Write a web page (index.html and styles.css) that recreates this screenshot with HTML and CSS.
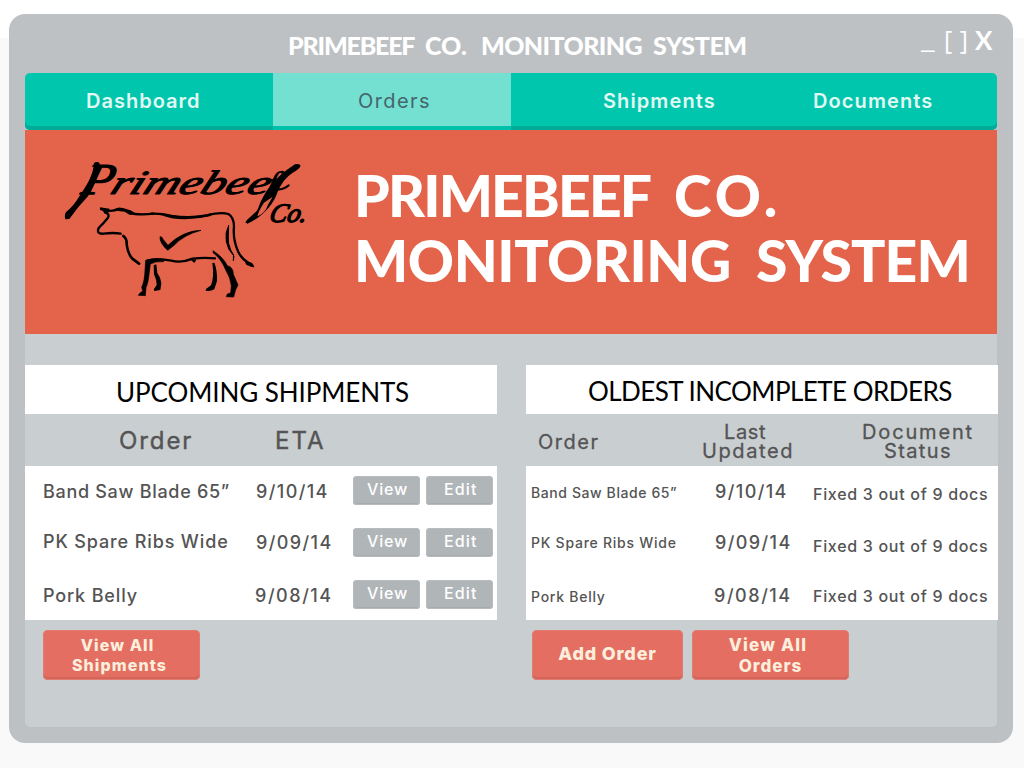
FILE: index.html
```html
<!DOCTYPE html>
<html lang="en">
<head>
<meta charset="utf-8">
<title>Primebeef Co. Monitoring System</title>
<link rel="stylesheet" href="styles.css">
</head>
<body>
<div class="window">
  <header class="titlebar">
    <h2 class="window-title"><span class="w-prime">PRIMEBEEF</span> <span class="w-co">CO.</span> <span class="w-monitoring">MONITORING</span> <span class="w-system">SYSTEM</span></h2>
    <div class="controls"><span class="minimize">_</span><span class="maximize">[ ]</span><span class="close">X</span></div>
  </header>
  <nav class="nav">
    <a class="tab tab-dashboard">Dashboard</a>
    <a class="tab tab-orders active">Orders</a>
    <a class="tab tab-shipments">Shipments</a>
    <a class="tab tab-documents">Documents</a>
  </nav>
  <main class="content">
    <section class="banner">
      <svg class="logo" viewBox="0 0 810 480" width="270" height="160">
        <g font-family="Liberation Serif, serif" font-style="italic" stroke="#000" stroke-width="4" stroke-linejoin="round">
          <text transform="translate(90 131) skewX(-16)" font-size="132" textLength="92" lengthAdjust="spacingAndGlyphs">P</text>
          <text transform="translate(176 131) skewX(-22)" font-size="102" stroke-width="3" textLength="474" lengthAdjust="spacingAndGlyphs">rimebee</text>
          <text transform="translate(646 131) skewX(-14)" font-size="98" stroke-width="2">f</text>
          <text transform="translate(655 216) skewX(-14)" font-size="80" textLength="112" lengthAdjust="spacingAndGlyphs">Co.</text>
        </g>
        <path d="M132 39Q142 33 149 40C150 66 134 108 114 139Q84 170 58 207L46 208Q42 194 49 185Q70 170 88 139C112 104 130 74 132 39Z"/>
        <path d="M735 43Q748 39 752 47Q748 58 728 68Q700 86 683 125C672 161 637 202 592 221L586 217C594 204 616 192 624 176C641 128 673 81 735 43Z"/>
        <path d="M668 140Q654 162 648 178Q636 195 622 199Q626 181 642 158Z" fill="#e4644b"/>
        <path d="M668 114Q690 126 716 106" fill="none" stroke="#000" stroke-width="6" stroke-linecap="round"/>
        <g fill="none" stroke="#000" stroke-linecap="round" stroke-linejoin="round">
          <path d="M153 177L174 182Q193 184 206 176Q230 178 254 192Q281 195 310 191" stroke-width="7"/>
          <path d="M165 187Q180 191 174 203Q162 218 146 234Q138 253 161 251Q190 247 212 251" stroke-width="7"/>
          <path d="M305 191Q335 190 365 198Q423 206 470 196Q513 185 535 192Q552 202 552 230Q548 269 565 306Q576 328 595 338" stroke-width="7"/>
          <path d="M220 258Q231 266 230 283Q234 312 247 326L267 341" stroke-width="8"/>
          <path d="M292 332Q320 324 364 332Q394 340 428 326Q460 322 495 325" stroke-width="7"/>
        </g>
        <path d="M149 172L179 176L176 187L164 190Z"/>
        <path d="M188 180Q206 169 219 179L240 180L258 195L238 194L224 185L205 183Z"/>
        <path d="M330 195Q430 206 486 189L482 198Q422 213 365 205Z"/>
        <path d="M585 336Q609 333 613 352L605 351L589 344Z"/>
        <path d="M536 226Q524 250 529 275Q533 299 552 318L550 332Q555 314 542 300Q532 278 535 257Z" stroke="#000" stroke-width="3"/>
        <path d="M330 260Q337 259 340 269L354 286Q399 242 453 241Q400 255 371 287L353 301Q328 278 330 260Z" stroke="#000" stroke-width="2"/>
        <path d="M287 331Q320 322 342 328L341 335Q317 333 301 342L295 389Q292 404 288 413L286 437L265 436Q267 430 278 423L275 412Q284 393 285 361Z" stroke="#000" stroke-width="2"/>
        <path d="M311 346L319 343L322 369Q332 382 334 400L331 420L312 423L312 417L320 405Q320 389 312 373Z"/>
        <path d="M487 339L493 338Q502 360 501 393L493 418Q481 425 467 422L468 417L483 406Q493 381 487 339Z"/>
        <path d="M489 302Q519 321 532 347Q550 351 550 373L564 405L557 419L551 441L529 440L532 432L542 429L544 407Q540 380 528 362Q513 325 489 308Z" stroke="#000" stroke-width="2"/>
        <path d="M423 330L440 328L433 339Z"/>
      </svg>
      <h1 class="banner-title"><span class="line"><span class="b-prime">PRIMEBEEF</span> <span class="b-co">CO.</span></span><span class="line"><span class="b-monitoring">MONITORING</span> <span class="b-system">SYSTEM</span></span></h1>
    </section>
    <div class="panels">
      <section class="panel shipments">
        <h3 class="panel-title">UPCOMING SHIPMENTS</h3>
        <div class="panel-head"><span class="head-order">Order</span><span class="head-eta">ETA</span></div>
        <div class="rows">
          <div class="row"><span class="name name-blade">Band Saw Blade 65”</span><span class="date">9/10/14</span><button class="small view">View</button><button class="small edit">Edit</button></div>
          <div class="row"><span class="name name-ribs raised-more">PK Spare Ribs Wide</span><span class="date raised">9/09/14</span><button class="small view">View</button><button class="small edit">Edit</button></div>
          <div class="row"><span class="name">Pork Belly</span><span class="date date-last">9/08/14</span><button class="small view">View</button><button class="small edit">Edit</button></div>
        </div>
        <div class="actions"><button class="big all-shipments"><span class="shift">View All</span><span>Shipments</span></button></div>
      </section>
      <section class="panel orders">
        <h3 class="panel-title">OLDEST INCOMPLETE ORDERS</h3>
        <div class="panel-head"><span class="head-order">Order</span><span class="head-updated"><span class="last">Last</span><span>Updated</span></span><span class="head-status"><span class="document">Document</span><span class="status">Status</span></span></div>
        <div class="rows">
          <div class="row"><span class="name name-blade">Band Saw Blade 65”</span><span class="date">9/10/14</span><span class="docs">Fixed 3 out of 9 docs</span></div>
          <div class="row"><span class="name raised-more">PK Spare Ribs Wide</span><span class="date raised">9/09/14</span><span class="docs">Fixed 3 out of 9 docs</span></div>
          <div class="row"><span class="name">Pork Belly</span><span class="date date-last">9/08/14</span><span class="docs raised-more">Fixed 3 out of 9 docs</span></div>
        </div>
        <div class="actions"><button class="big add-order"><span>Add Order</span></button><button class="big all-orders"><span>View All</span><span class="orders-word">Orders</span></button></div>
      </section>
    </div>
  </main>
</div>
</body>
</html>
```

FILE: styles.css
```css
* { box-sizing: border-box; }
body {
  margin: 0;
  height: 768px;
  padding: 14px 11px 25px 9px;
  background: linear-gradient(#fff 38px, #f9f9f9 38px);
  font-family: Inter, sans-serif;
  color: #545454;
  overflow: hidden;
}
h1, h2, h3 { margin: 0; }
span { white-space: nowrap; }
.window {
  height: 729px;
  padding: 0 16px 16px;
  background: #bdc1c4;
  border-radius: 16px;
}
.titlebar {
  display: flex;
  height: 59px;
  padding-left: 263px;
  color: #fff;
}
.window-title {
  display: flex;
  width: 633px;
  font: 900 25px/62px Lato, sans-serif;
}
.w-prime { width: 137px; letter-spacing: -1.2px; }
.w-co { width: 56px; }
.w-monitoring { width: 172px; letter-spacing: -0.6px; }
.w-system { letter-spacing: -0.4px; }
.controls {
  display: flex;
  font: 500 25px/52px "Open Sans", sans-serif;
}
.minimize { width: 23px; transform: scaleX(1.25); transform-origin: left; line-height: 49px; }
.maximize { width: 31px; line-height: 50px; letter-spacing: 0.6px; }
.close { font: 700 26px/52px Lato, sans-serif; }
.nav {
  display: flex;
  height: 57px;
  background: #00c6ae;
  border-radius: 5px;
  box-shadow: inset 0 -4px #00ac97;
}
.tab {
  height: 57px;
  font-size: 20px;
  line-height: 57px;
  font-weight: 600;
  letter-spacing: 1.1px;
  color: #e2f8f3;
}
.tab-dashboard { width: 248px; padding-left: 61px; letter-spacing: 1px; }
.tab-orders {
  width: 238px;
  padding-left: 85px;
  background: #73e0d2;
  border-bottom: 4px solid #00c1aa;
  font-weight: 400;
  letter-spacing: 1.41px;
  color: #45666b;
}
.tab-shipments { width: 210px; padding-left: 92px; }
.tab-documents { padding-left: 92px; }
.content {
  height: 597px;
  background: #c9ced1;
  border-radius: 0 0 5px 5px;
}
.banner {
  display: flex;
  height: 204px;
  padding: 20px 0 0 25px;
  background: #e4644b;
}
.logo { display: block; flex: none; }
.banner-title {
  padding: 13px 0 0 34px;
  font: 900 57px/65px Lato, sans-serif;
  color: #fff;
}
.line { display: flex; }
.b-prime { width: 320px; letter-spacing: -1.8px; }
.b-co { letter-spacing: 4px; }
.b-monitoring { width: 402px; letter-spacing: -0.4px; }
.b-system { letter-spacing: -0.9px; }
.panels { display: flex; gap: 29px; padding-top: 31px; }
.panel { flex: none; width: 472px; }
.panel-title {
  height: 49px;
  background: #fff;
  font: 400 26px/54px Lato, sans-serif;
  color: #000;
}
.shipments .panel-title { padding-left: 91px; letter-spacing: -0.09px; }
.orders .panel-title { padding-left: 62px; line-height: 52px; letter-spacing: -0.54px; }
.panel-head { display: flex; height: 52px; background: #c9ced1; }
.shipments .panel-head { padding-left: 94px; font-size: 24px; line-height: 53px; -webkit-text-stroke: 0.4px #545454; }
.shipments .head-order { width: 156px; letter-spacing: 1.9px; }
.head-eta { letter-spacing: 2px; }
.orders .panel-head { padding-left: 12px; font-size: 20px; line-height: 19px; -webkit-text-stroke: 0.3px #545454; }
.orders .head-order { width: 164px; line-height: 56px; letter-spacing: 1.5px; }
.head-updated, .head-status { display: flex; flex-direction: column; padding-top: 9px; }
.head-updated { width: 160px; letter-spacing: 1.6px; }
.last { padding-left: 22px; letter-spacing: 0.63px; }
.document { letter-spacing: 1.85px; }
.status { padding-left: 22px; letter-spacing: 1.39px; }
.rows { height: 154px; background: #fff; }
.row { display: flex; height: 52px; font-size: 18px; font-weight: 500; line-height: 51px; }
.raised { margin-top: -1px; }
.raised-more { margin-top: -2px; }
.shipments .row { padding-left: 18px; }
.shipments .name { width: 213px; letter-spacing: 0.85px; }
.shipments .name-blade { letter-spacing: 0.7px; }
.shipments .name-ribs { letter-spacing: 0.87px; }
.date { letter-spacing: 1.4px; }
.shipments .date { width: 97px; }
.date-last { letter-spacing: 1.55px; text-indent: -1px; }
button { border: 0; margin: 0; padding: 0; font-family: Inter, sans-serif; }
.small {
  width: 67px;
  height: 29px;
  margin-top: 10px;
  padding-bottom: 2px;
  border-radius: 4px;
  background: #b0b5b8;
  box-shadow: inset 0 0 0 1px #b8bcbe, inset 0 -2px #a7acaf;
  color: #fff;
  font-size: 16px;
  font-weight: 500;
  line-height: 27px;
  text-align: left;
}
.view { padding-left: 14px; letter-spacing: 0.83px; }
.edit { margin-left: 6px; padding-left: 18px; letter-spacing: 1.14px; }
.orders .row { padding-left: 5px; }
.orders .name { width: 184px; font-size: 14px; line-height: 54px; letter-spacing: 0.75px; }
.orders .name-blade { letter-spacing: 0.59px; }
.orders .date { width: 98px; }
.docs { font-size: 16px; line-height: 56px; letter-spacing: 0.7px; }
.actions { display: flex; gap: 9px; padding-top: 10px; }
.shipments .actions { padding-left: 18px; }
.orders .actions { padding-left: 6px; }
.big {
  display: flex;
  flex-direction: column;
  align-items: center;
  width: 157px;
  height: 50px;
  border-radius: 5px;
  background: #e46e61;
  box-shadow: inset 0 0 0 1px #e27a6f, inset 0 -3px #d3665a;
  color: #fbeedd;
  font-size: 16px;
  font-weight: 800;
  line-height: 20px;
  letter-spacing: 1.1px;
}
.all-shipments { padding: 5px 4px 0 0; }
.shift { margin-right: 4px; }
.add-order { width: 151px; padding-bottom: 2px; justify-content: center; font-size: 18px; letter-spacing: 0.82px; }
.all-orders { padding-top: 5px; font-size: 17px; line-height: 21px; letter-spacing: 1.2px; }
.all-orders span { margin-right: 5px; }
.all-orders .orders-word { margin-right: 0; letter-spacing: 1px; }
```
